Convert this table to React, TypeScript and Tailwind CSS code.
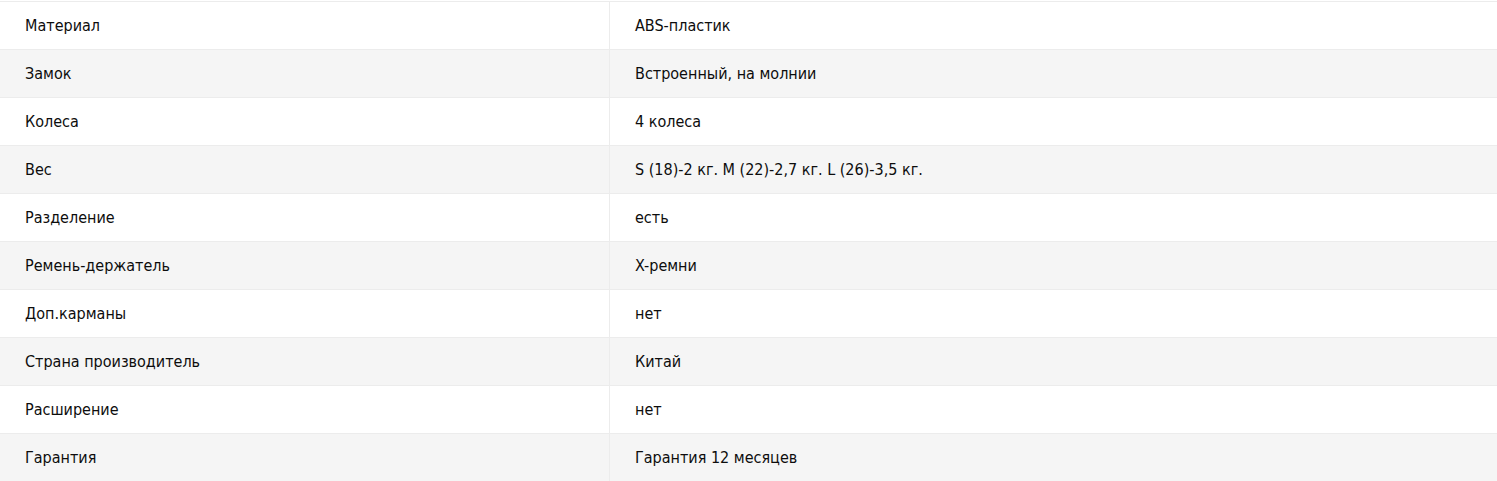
import React from "react";

const specs: [string, string][] = [
  ["Материал", "ABS-пластик"],
  ["Замок", "Встроенный, на молнии"],
  ["Колеса", "4 колеса"],
  ["Вес", "S (18)-2 кг. M (22)-2,7 кг. L (26)-3,5 кг."],
  ["Разделение", "есть"],
  ["Ремень-держатель", "X-ремни"],
  ["Доп.карманы", "нет"],
  ["Страна производитель", "Китай"],
  ["Расширение", "нет"],
  ["Гарантия", "Гарантия 12 месяцев"],
];

const App: React.FC = () => {
  return (
    <div className="min-h-screen bg-white pt-px font-['DejaVu_Sans_Condensed','DejaVu_Sans',sans-serif] text-[16px] text-[#0d0d0d]">
      <div className="border-t border-[#ececec]">
        {specs.map(([name, value], i) => (
          <div
            key={name}
            className={`grid grid-cols-[610px_1fr] h-[48px] border-b border-[#ececec] ${
              i % 2 === 1 ? "bg-[#f5f5f5]" : "bg-white"
            }`}
          >
            <div className="flex items-center pl-[25px] border-r border-[#ececec]">
              {name}
            </div>
            <div className="flex items-center pl-[25px]">{value}</div>
          </div>
        ))}
      </div>
    </div>
  );
};

export default App;
